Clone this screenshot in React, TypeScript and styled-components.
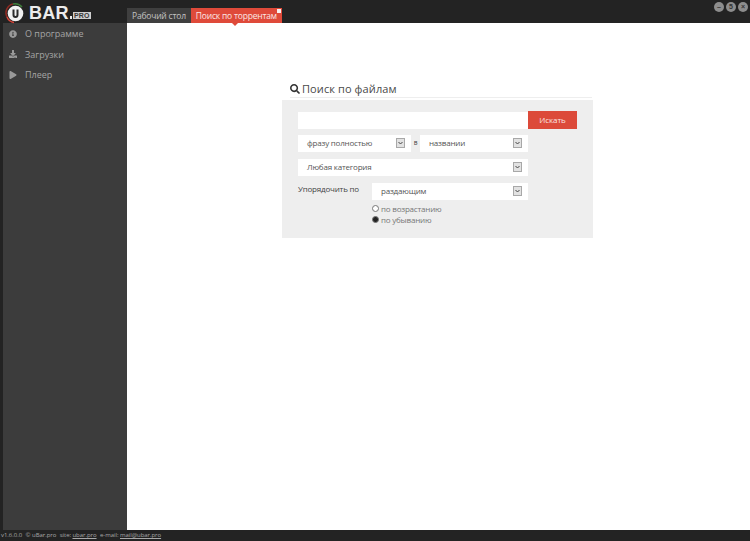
import React from "react";
import styled, { createGlobalStyle } from "styled-components";
import { FaInfoCircle, FaDownload, FaPlay, FaSearch } from "react-icons/fa";

const Global = createGlobalStyle`
  html, body { margin: 0; padding: 0; height: 100%; overflow: hidden; }
  body { font-family: "Open Sans", "Liberation Sans", sans-serif; background: #232323; }
  #root { height: 100%; }
`;

const Shell = styled.div`
  width: 750px; height: 541px; display: flex; flex-direction: column; background: #232323; overflow: hidden;
`;
const Header = styled.header`
  height: 23px; flex: none; display: flex; align-items: flex-start; position: relative;
`;
const Logo = styled.div`
  width: 127px; height: 23px; flex: none; display: flex; align-items: center; padding: 3px 0 0 7px; box-sizing: border-box;
`;
const LogoMark = styled.svg`
  width: 17px; height: 20px; flex: none; margin-right: 5px; overflow: visible;
`;
const LogoText = styled.span`
  font-family: "Liberation Sans", sans-serif; font-weight: 700; font-size: 18px; letter-spacing: 0.3px; color: #ececec; line-height: 20px;
`;
const LogoDot = styled.span`
  width: 2px; height: 3px; background: #ececec; margin: 9px 1px 0 1px; flex: none;
`;
const LogoPro = styled.span`
  font-family: "Liberation Sans", sans-serif; font-weight: 700; font-size: 7px; line-height: 7px; color: #3a3a3a; background: #cfcfcf; padding: 0 1px; margin-top: 5px; letter-spacing: 0.2px;
`;
const Tabs = styled.nav`
  display: flex; margin-top: 8px; height: 15px;
`;
const Tab = styled.div<{ $active?: boolean }>`
  position: relative; height: 15px; line-height: 16px; padding: 0 5px;
  font-size: 8.5px; letter-spacing: -0.2px; white-space: nowrap;
  background: ${p => (p.$active ? "#df4a3a" : "#3f3f3f")};
  color: ${p => (p.$active ? "#fbe7e4" : "#c2c2c2")};
`;
const TabClose = styled.span`
  position: absolute; top: 1px; right: 1px; width: 4px; height: 4px; background: #f6f0ef;
`;
const TabArrow = styled.span`
  position: absolute; left: 41px; bottom: -3px; width: 0; height: 0;
  border-left: 3px solid transparent; border-right: 3px solid transparent; border-top: 3px solid #df4a3a;
`;
const WindowButtons = styled.div`
  position: absolute; top: 2px; right: 2px; display: flex; gap: 2px;
`;
const WindowButton = styled.span`
  width: 10px; height: 10px; border-radius: 50%; background: #8d8d8d; display: flex; align-items: center; justify-content: center;
  color: #333; font-size: 7px; line-height: 10px; font-family: "Liberation Sans", sans-serif; font-weight: 700;
`;
const Body = styled.div`
  flex: 1; display: flex; min-height: 0; padding-left: 3px;
`;
const Sidebar = styled.aside`
  width: 124px; flex: none; background: #3c3c3c; padding-top: 1px; box-sizing: border-box;
`;
const MenuItem = styled.div`
  height: 20.5px; display: flex; align-items: center; color: #a4a4a4; font-size: 9px; padding: 0 0 1px 6px; box-sizing: border-box;
`;
const MenuIcon = styled.span`
  width: 8px; display: flex; justify-content: center; margin-right: 8px; color: #999; font-size: 8px;
`;
const Main = styled.main`
  flex: 1; background: #fff; display: flex; flex-direction: column; align-items: flex-start; padding: 58px 0 0 155px; box-sizing: border-box; min-width: 0;
`;
const Title = styled.h1`
  margin: 0; width: 300px; height: 16px; margin-left: 8px; display: flex; align-items: center; gap: 2px;
  font-weight: 400; font-size: 11px; line-height: 16px; color: #4a4a4a; letter-spacing: 0.1px; box-sizing: border-box;
`;
const TitleRule = styled.div`
  width: 302px; height: 1px; background: #eee; margin: 0 0 2px 8px;
`;
const Panel = styled.section`
  width: 311px; height: 138px; background: #eeeeee; padding: 11px 15px 0 16px; box-sizing: border-box;
`;
const Row = styled.div<{ $mb?: number }>`
  display: flex; align-items: flex-start; margin-bottom: ${p => p.$mb ?? 0}px;
`;
const TextInput = styled.div`
  width: 230px; height: 17px; background: #fff; margin-top: 1px;
`;
const SearchButton = styled.button`
  width: 49px; height: 18px; border: 0; background: #dc4a3a; color: #fbe4e1; font: 400 8px "Open Sans", sans-serif; letter-spacing: -0.1px; padding: 0 0 2px;
`;
const Select = styled.div<{ $w: number }>`
  width: ${p => p.$w}px; height: 17px; background: #fff; display: flex; align-items: center; justify-content: space-between;
  font-size: 8px; letter-spacing: -0.2px; line-height: 15px; color: #555; padding: 0 6px 2px 9px; box-sizing: border-box; flex: none; white-space: nowrap;
`;
const Caret = styled.span`
  width: 9px; height: 10px; background: #e2e2e2; border: 1px solid #a8a8a8; box-sizing: border-box; display: flex; align-items: center; justify-content: center; flex: none;
`;
const CaretIcon = styled.svg`
  width: 5px; height: 4px; display: block;
`;
const InLabel = styled.span`
  width: 9px; text-align: center; font-size: 6.5px; line-height: 16px; color: #444; flex: none;
`;
const SortLabel = styled.span`
  width: 74px; font-size: 8px; letter-spacing: -0.2px; font-weight: 400; line-height: 12px; color: #444; flex: none;
`;
const Radios = styled.div`
  display: flex; flex-direction: column; margin: 3px 0 0 74px;
`;
const RadioRow = styled.label`
  display: flex; align-items: center; height: 11px; gap: 2px; font-size: 8px; letter-spacing: -0.2px; color: #777;
`;
const RadioDot = styled.span<{ $on?: boolean }>`
  width: 5px; height: 5px; border-radius: 50%; background: ${p => (p.$on ? "#222" : "#fff")};
  border: 1px solid #777; box-sizing: content-box; flex: none;
`;
const Footer = styled.footer`
  height: 11px; flex: none; display: flex; align-items: center; padding-left: 1px; gap: 3.5px; font-size: 6px; letter-spacing: -0.05px; color: #a8a8a8; line-height: 11px; white-space: nowrap;
`;
const FootLink = styled.a`
  color: #a8a8a8; text-decoration: underline;
`;

const Chevron = () => (
  <Caret>
    <CaretIcon viewBox="0 0 5 4">
      <path d="M0.5 1L2.5 3L4.5 1" fill="none" stroke="#444" strokeWidth="1" />
    </CaretIcon>
  </Caret>
);

export default function App() {
  return (
    <Shell>
      <Global />
      <Header>
        <Logo>
          <LogoMark viewBox="0 0 17 20">
            <path d="M0 14A9 9 0 0 1 6 1" fill="none" stroke="#8f2a22" strokeWidth="1.5" />
            <path d="M6 1A9 9 0 0 1 15 4" fill="none" stroke="#3f7d3a" strokeWidth="1.5" />
            <path d="M0 14A9 9 0 0 0 7 19.5" fill="none" stroke="#d8463a" strokeWidth="1.5" />
            <circle cx="8.5" cy="10.5" r="7.8" fill="#f1f1f1" />
            <path d="M5.5 6.5v5.5a3 3 0 0 0 6 0V6.5h-2v5.5a1 1 0 0 1-2 0V6.5z" fill="#2a2a2a" />
          </LogoMark>
          <LogoText>BAR</LogoText>
          <LogoDot />
          <LogoPro>PRO</LogoPro>
        </Logo>
        <Tabs>
          <Tab>Рабочий стол</Tab>
          <Tab $active>
            Поиск по торрентам
            <TabClose />
            <TabArrow />
          </Tab>
        </Tabs>
        <WindowButtons>
          <WindowButton>–</WindowButton>
          <WindowButton>5</WindowButton>
          <WindowButton>×</WindowButton>
        </WindowButtons>
      </Header>
      <Body>
        <Sidebar>
          <MenuItem><MenuIcon><FaInfoCircle /></MenuIcon>О программе</MenuItem>
          <MenuItem><MenuIcon><FaDownload /></MenuIcon>Загрузки</MenuItem>
          <MenuItem><MenuIcon><FaPlay /></MenuIcon>Плеер</MenuItem>
        </Sidebar>
        <Main>
          <Title><FaSearch size={10} color="#333" />Поиск по файлам</Title>
          <TitleRule />
          <Panel>
            <Row $mb={6}>
              <TextInput />
              <SearchButton>Искать</SearchButton>
            </Row>
            <Row $mb={7}>
              <Select $w={113}>фразу полностью<Chevron /></Select>
              <InLabel>в</InLabel>
              <Select $w={108}>названии<Chevron /></Select>
            </Row>
            <Row $mb={7}>
              <Select $w={230}>Любая категория<Chevron /></Select>
            </Row>
            <Row>
              <SortLabel>Упорядочить по</SortLabel>
              <Select $w={156}>раздающим<Chevron /></Select>
            </Row>
            <Radios>
              <RadioRow><RadioDot />по возрастанию</RadioRow>
              <RadioRow><RadioDot $on />по убыванию</RadioRow>
            </Radios>
          </Panel>
        </Main>
      </Body>
      <Footer>
        <span>v1.6.0.0</span>
        <span>© uBar.pro</span>
        <span>site: <FootLink>ubar.pro</FootLink></span>
        <span>e-mail: <FootLink>mail@ubar.pro</FootLink></span>
      </Footer>
    </Shell>
  );
}
